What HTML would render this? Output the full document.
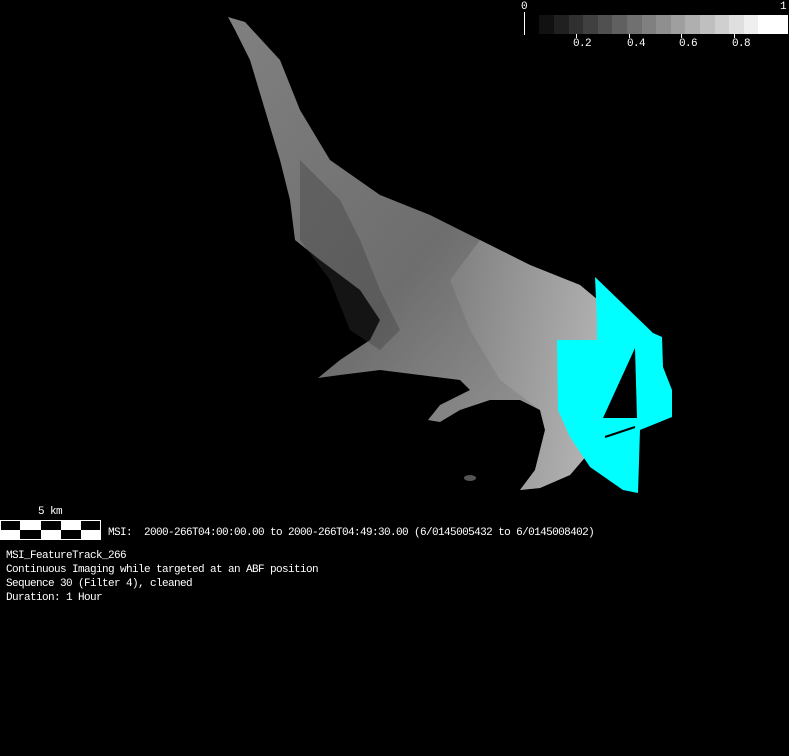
<!DOCTYPE html>
<html><head><meta charset="utf-8"><style>
html,body{margin:0;padding:0;background:#000;width:789px;height:756px;overflow:hidden}
.t{position:absolute;color:#fff;font-family:"Liberation Mono",monospace;font-size:11px;letter-spacing:-0.6px;line-height:14px;white-space:pre}
</style></head><body>
<svg width="789" height="756" style="position:absolute;left:0;top:0">
<defs>
<linearGradient id="g" x1="0" y1="0" x2="1" y2="1">
<stop offset="0" stop-color="#808080"/><stop offset="0.5" stop-color="#6e6e6e"/><stop offset="1" stop-color="#a8a8a8"/>
</linearGradient>
<linearGradient id="g2" x1="0" y1="0" x2="1" y2="0">
<stop offset="0" stop-color="#888"/><stop offset="1" stop-color="#cfcfcf"/>
</linearGradient>
</defs>
<polygon fill="url(#g)" points="228,17 245,22 280,60 300,110 330,160 380,195 430,215 480,240 530,265 580,285 610,310 625,350 620,400 600,440 570,475 540,488 520,490 535,470 545,430 540,410 520,400 490,400 460,410 440,422 428,420 440,405 470,390 460,380 420,375 380,370 340,375 318,378 340,360 370,340 380,320 360,290 320,260 295,240 290,200 280,160 265,110 250,60 235,30"/>
<polygon fill="url(#g2)" opacity="0.6" points="480,240 530,265 580,285 610,310 625,350 620,400 600,440 570,475 540,488 520,490 535,470 545,430 540,410 500,380 470,330 450,280"/>
<polygon fill="#3a3a3a" opacity="0.35" points="300,160 340,200 360,240 380,290 400,330 380,350 350,330 330,280 300,240"/>
<ellipse cx="470" cy="478" rx="6" ry="3" fill="#555"/>
<polygon fill="#00ffff" points="595,277 653,333 662,337 663,367 672,390 672,417 640,430 638,493 623,490 590,467 570,437 558,410 557,340 597,340 597,320"/>
<polygon fill="#000" points="635,348 637,418 603,418"/>
<path d="M605,437 L635,427" stroke="#000" stroke-width="2"/>
<rect x="0" y="520" width="101" height="20" fill="#fff"/>
<g fill="#000">
<rect x="1" y="521" width="19" height="9"/><rect x="41" y="521" width="20" height="9"/><rect x="81" y="521" width="19" height="9"/>
<rect x="20" y="530" width="21" height="9"/><rect x="61" y="530" width="20" height="9"/>
</g>
<rect x="524" y="12" width="1" height="23" fill="#fff"/>
<g>
<rect x="539" y="15" width="15" height="19" fill="#111"/>
<rect x="554" y="15" width="15" height="19" fill="#202020"/>
<rect x="569" y="15" width="15" height="19" fill="#303030"/>
<rect x="583" y="15" width="15" height="19" fill="#404040"/>
<rect x="598" y="15" width="15" height="19" fill="#505050"/>
<rect x="612" y="15" width="15" height="19" fill="#606060"/>
<rect x="627" y="15" width="15" height="19" fill="#707070"/>
<rect x="642" y="15" width="15" height="19" fill="#808080"/>
<rect x="656" y="15" width="15" height="19" fill="#8f8f8f"/>
<rect x="671" y="15" width="15" height="19" fill="#9f9f9f"/>
<rect x="685" y="15" width="15" height="19" fill="#afafaf"/>
<rect x="700" y="15" width="15" height="19" fill="#bfbfbf"/>
<rect x="715" y="15" width="15" height="19" fill="#cfcfcf"/>
<rect x="729" y="15" width="15" height="19" fill="#dfdfdf"/>
<rect x="744" y="15" width="15" height="19" fill="#efefef"/>
<rect x="758" y="15" width="30" height="19" fill="#fff"/>
</g>
<g fill="#fff"><rect x="576" y="34" width="1" height="4"/><rect x="629" y="34" width="1" height="4"/><rect x="681" y="34" width="1" height="4"/><rect x="734" y="34" width="1" height="4"/></g>
</svg>
<div class="t" style="left:521px;top:0px">0</div>
<div class="t" style="left:780px;top:0px">1</div>
<div class="t" style="left:573px;top:37px">0.2</div>
<div class="t" style="left:627px;top:37px">0.4</div>
<div class="t" style="left:679px;top:37px">0.6</div>
<div class="t" style="left:732px;top:37px">0.8</div>
<div class="t" style="left:38px;top:505px">5 km</div>
<div class="t" style="left:108px;top:526px">MSI:  2000-266T04:00:00.00 to 2000-266T04:49:30.00 (6/0145005432 to 6/0145008402)</div>
<div class="t" style="left:6px;top:549px">MSI_FeatureTrack_266
Continuous Imaging while targeted at an ABF position
Sequence 30 (Filter 4), cleaned
Duration: 1 Hour</div>
</body></html>
